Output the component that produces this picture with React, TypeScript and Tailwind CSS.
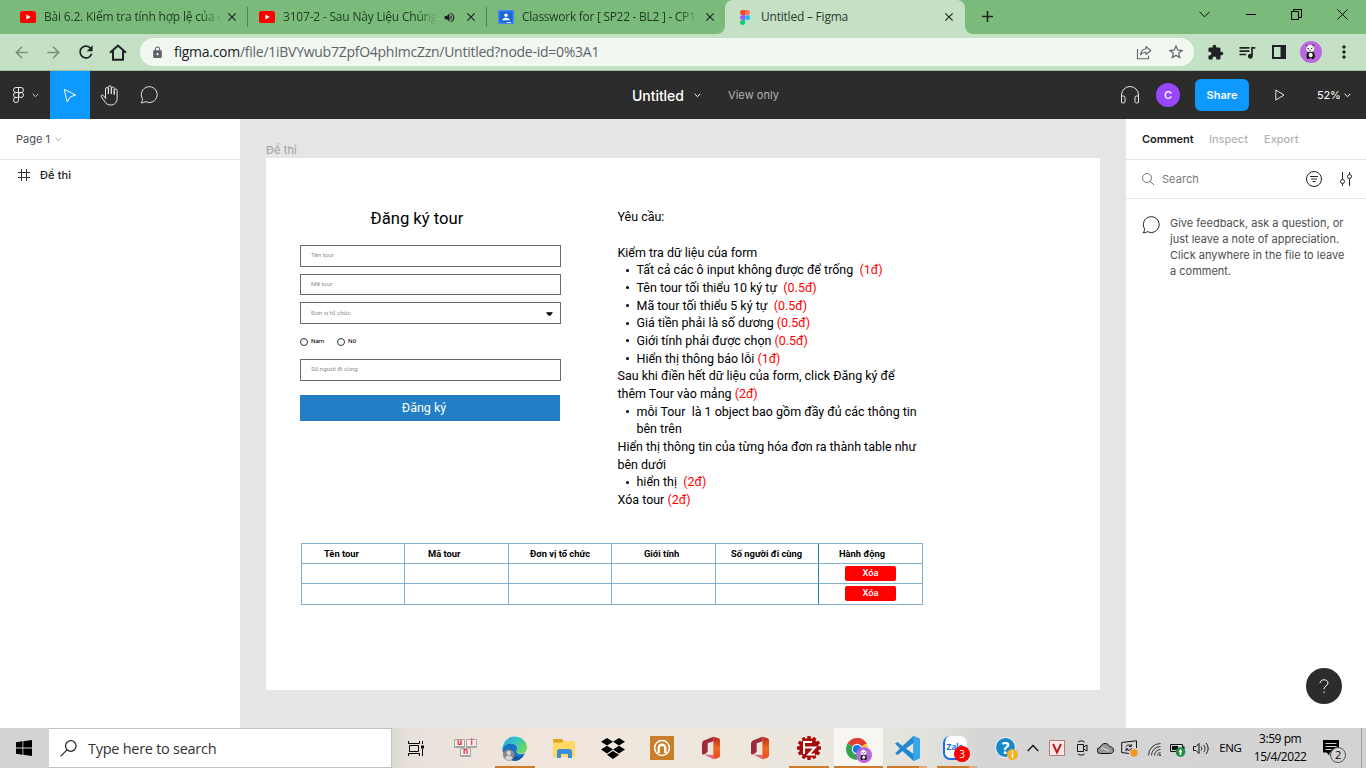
import React from "react";
import {
  MdArrowBack,
  MdArrowForward,
  MdRefresh,
  MdLock,
  MdStarBorder,
  MdExtension,
  MdQueueMusic,
  MdMoreVert,
  MdClose,
  MdAdd,
  MdVolumeUp,
} from "react-icons/md";

const segoe = "font-['Open_Sans','Noto_Sans',sans-serif]";
const inter = "font-['Inter',sans-serif]";
const roboto = "font-['Roboto',sans-serif]";

function YouTube() {
  return (
    <svg width="16" height="12" viewBox="0 0 16 12" className="shrink-0">
      <rect width="16" height="12" rx="2.6" fill="#f00" />
      <path d="M6.4 3.4v5.2L10.8 6z" fill="#fff" />
    </svg>
  );
}

function Classroom() {
  return (
    <svg width="16" height="14" viewBox="0 0 16 14" className="shrink-0">
      <rect width="16" height="14" rx="1" fill="#4285f4" />
      <rect x="1.5" y="1.5" width="13" height="11" fill="#1967d2" />
      <circle cx="8" cy="5.2" r="1.7" fill="#fff" />
      <path d="M4.2 10.3c0-1.7 2-2.6 3.8-2.6s3.8.9 3.8 2.6z" fill="#fff" />
      <rect x="9" y="12" width="4" height="1" fill="#e8eaed" />
    </svg>
  );
}

function FigmaColor() {
  return (
    <svg width="10" height="15" viewBox="0 0 10 15" className="shrink-0">
      <path d="M5 0H2.5a2.5 2.5 0 0 0 0 5H5z" fill="#f24e1e" />
      <path d="M5 0h2.5a2.5 2.5 0 0 1 0 5H5z" fill="#ff7262" />
      <path d="M5 5H2.5a2.5 2.5 0 0 0 0 5H5z" fill="#a259ff" />
      <circle cx="7.5" cy="7.5" r="2.5" fill="#1abcfe" />
      <path d="M5 10H2.5A2.5 2.5 0 1 0 5 12.5z" fill="#0acf83" />
    </svg>
  );
}

function Panda({ size }: { size: number }) {
  return (
    <svg width={size} height={size} viewBox="0 0 22 22" className="shrink-0">
      <circle cx="11" cy="11" r="11" fill="#b968e0" />
      <circle cx="7.2" cy="5" r="1.2" fill="#333" />
      <circle cx="13" cy="4.6" r="1.2" fill="#333" />
      <ellipse cx="10.2" cy="7.4" rx="4" ry="3.5" fill="#f5f5f5" />
      <path d="M7.4 7.4l1.600.500M12.400 7l-1.500.700M9.400 9.300h1.200" stroke="#222" strokeWidth="1" />
      <path d="M7 11.500c2-1 5.500-1 7.200 0l1 4.500-1.200.500.200 1.500H11.400v-1H9.800v1H7l.200-1.500-1-.500z" fill="#1c1c1c" />
      <ellipse cx="10.700" cy="14" rx="2" ry="2.300" fill="#f5f5f5" />
    </svg>
  );
}

function Chevron({ className = "", w = 7 }: { className?: string; w?: number }) {
  return (
    <svg width={w} height="5" viewBox="0 0 7 5" fill="none" stroke="currentColor" className={className}>
      <path d="M.6.8l2.9 2.9L6.4.8" />
    </svg>
  );
}

function Bubble() {
  return (
    <svg width="19" height="18" viewBox="0 0 19 18" fill="none" stroke="currentColor" className="shrink-0">
      <path d="M1 16.8c1.2-1.2 1.7-2.5 1.5-4.1A7.9 7.9 0 1 1 5.6 15.6c-1.2.9-2.7 1.3-4.6 1.2z" strokeLinejoin="round" />
    </svg>
  );
}

type TabProps = { icon: React.ReactNode; label: string; width: string; textWidth: string; audio?: boolean; lead: string };

function Tab({ icon, label, width, textWidth, audio, lead }: TabProps) {
  return (
    <div className={`relative flex h-[34px] shrink-0 items-center ${width} ${lead}`}>
      {icon}
      <div
        className={`ml-2 h-5 overflow-hidden whitespace-nowrap text-[12px] leading-5 tracking-[-0.200px] text-[#1e3a20] [mask-image:linear-gradient(to_right,black_88%,transparent)] ${textWidth}`}
      >
        {label}
      </div>
      {audio && <MdVolumeUp size={13} className="ml-[6px] text-[#202124]" />}
      <MdClose size={14} className="absolute right-[9px] text-[#202124]" />
      <div className="absolute right-0 top-[7px] h-5 w-px bg-[#4f8352]" />
    </div>
  );
}

function BrowserTabs() {
  return (
    <div className="flex h-[34px] bg-[#7abb7c]">
      <Tab icon={<YouTube />} label="Bài 6.2. Kiểm tra tính hợp lệ của c" width="w-[248px]" textWidth="w-[178px]" lead="pl-5" />
      <Tab icon={<YouTube />} label="3107-2 - Sau Này Liệu Chúng" width="w-[239px]" textWidth="w-[154px]" lead="pl-[11px]" audio />
      <div className="relative flex h-[34px] w-[238px] shrink-0 items-center pl-[11px]">
        <Classroom />
        <div className="ml-2 h-5 w-[176px] overflow-hidden whitespace-nowrap text-[12px] leading-5 tracking-[-0.280px] text-[#1e3a20] [mask-image:linear-gradient(to_right,black_90%,transparent)]">
          Classwork for [ SP22 - BL2 ] - CP1
        </div>
        <MdClose size={14} className="absolute right-[8px] text-[#202124]" />
      </div>
      <div className="relative flex h-[34px] w-[240px] shrink-0 items-center rounded-t-lg bg-[#c5e1c5] pl-[15px]">
        <svg width="8" height="8" className="absolute -left-2 bottom-0">
          <path d="M8 0v8H0a8 8 0 0 0 8-8z" fill="#c5e1c5" />
        </svg>
        <svg width="8" height="8" className="absolute -right-2 bottom-0">
          <path d="M0 0v8h8a8 8 0 0 1-8-8z" fill="#c5e1c5" />
        </svg>
        <FigmaColor />
        <div className="ml-[11px] whitespace-nowrap text-[12px] leading-5 tracking-[-0.220px] text-[#2a3a2b]">Untitled – Figma</div>
        <MdClose size={14} className="absolute right-[9px] text-[#202124]" />
      </div>
      <MdAdd size={19} className="ml-[13px] mt-[7px] text-[#202124]" />
      <div className="ml-auto flex h-7 items-center text-black">
        <svg width="11" height="7" viewBox="0 0 11 7" fill="none" stroke="currentColor" className="mr-9">
          <path d="M.5.8l5 5 5-5" />
        </svg>
        <div className="mr-[35px] h-px w-[10px] bg-black" />
        <svg width="11" height="11" viewBox="0 0 11 11" fill="none" stroke="currentColor" className="mr-[35px]">
          <path d="M.5 2.5h7v8h-7zM2.5 2.5v-2h8v8h-3" />
        </svg>
        <svg width="11" height="11" viewBox="0 0 11 11" fill="none" stroke="currentColor" className="mr-[18px]">
          <path d="M.5.5l10 10M10.500.5l-10 10" />
        </svg>
      </div>
    </div>
  );
}

function AddressBar() {
  return (
    <div className="flex h-[37px] items-center border-b border-[#a3bda3] bg-[#c5e1c5] text-[#202124]">
      <MdArrowBack size={19} className="ml-[12px] text-[#7d917d]" />
      <MdArrowForward size={19} className="ml-[13px] text-[#7d917d]" />
      <MdRefresh size={20} className="ml-[13px]" />
      <svg width="18" height="17" viewBox="0 0 18 17" fill="none" stroke="currentColor" strokeWidth="2" className="ml-[13px]">
        <path d="M1 8.800L9 1.500l8 7.300M4 7v8.700h10V7" />
      </svg>
      <div className="ml-[13px] flex h-7 w-[1054px] items-center rounded-full bg-[#f1f8f1]">
        <MdLock size={13} className="ml-[11px] text-[#5f6368]" />
        <div className="ml-[10px] whitespace-nowrap text-[14px] leading-5 tracking-[-0.265px] text-[#5f6368]">
          <span className="text-[#202124]">figma.com</span>/file/1iBVYwub7ZpfO4phImcZzn/Untitled?node-id=0%3A1
        </div>
        <svg width="16" height="15" viewBox="0 0 16 15" fill="none" stroke="#5f6368" strokeWidth="1.100" className="ml-auto mr-[15px]">
          <path d="M1.500 4v9.800h11v-3" />
          <path d="M10 1.500l4.800 4.200L10 9.500V7.300C7.500 7.200 5.800 8 4.500 10c.3-3.600 2-5.800 5.500-6.200z" strokeLinejoin="round" />
        </svg>
        <MdStarBorder size={18} className="mr-[9px] text-[#5f6368]" />
      </div>
      <MdExtension size={17} className="ml-[13px]" />
      <MdQueueMusic size={20} className="ml-[13px]" />
      <svg width="14" height="14" viewBox="0 0 14 14" className="ml-[15px]">
        <path d="M1 1h12v12H1z" fill="none" stroke="#202124" strokeWidth="2" />
        <path d="M8.500 1H13v12H8.500z" fill="#202124" />
      </svg>
      <div className="ml-[14px]">
        <Panda size={22} />
      </div>
      <MdMoreVert size={20} className="ml-3" />
    </div>
  );
}

function FigmaBar() {
  return (
    <div className={`flex h-12 items-center bg-[#2c2c2c] text-white ${inter}`}>
      <div className="flex h-12 w-[50px] items-center pl-[13px]">
        <svg width="11" height="16" viewBox="0 0 11 16" fill="none" stroke="#e6e6e6">
          <path d="M5.500.5H3a2.500 2.500 0 0 0 0 5h2.500zM5.500.5H8a2.500 2.500 0 0 1 0 5H5.500zM5.500 5.500H3a2.500 2.500 0 0 0 0 5h2.500zM5.500 10.500H3A2.500 2.500 0 1 0 5.500 13z" />
          <circle cx="8" cy="8" r="2.500" />
        </svg>
        <Chevron className="ml-[8px] text-[#ccc]" />
      </div>
      <div className="flex h-12 w-10 items-center justify-center bg-[#0d99ff]">
        <svg width="14" height="15" viewBox="0 0 14 15" fill="none" stroke="#fff">
          <path d="M1.200 1.200l11.300 5.900-5.100 1.700-3.300 5z" strokeLinejoin="round" />
        </svg>
      </div>
      <div className="flex h-12 w-10 items-center justify-center pr-[2px]">
        <svg width="19" height="21" viewBox="0 0 19 21" fill="none" stroke="#e6e6e6" strokeLinecap="round" strokeLinejoin="round">
          <path d="M5.500 11.500V4a1.400 1.400 0 0 1 2.900 0v5V2.300a1.400 1.400 0 0 1 2.900 0V9 3.500a1.400 1.400 0 0 1 2.900 0V9.500 5.500a1.400 1.400 0 0 1 2.900 0V13c0 4.300-2.600 7-6.300 7-3.300 0-5-1.500-6.500-4L1.400 12c-1-1.800 1-2.700 2-1.400l2.100 2.600z" />
        </svg>
      </div>
      <div className="flex h-12 w-10 items-center justify-center pr-[2px] text-[#e6e6e6]">
        <Bubble />
      </div>
      <div className="ml-[461px] w-[54px] whitespace-nowrap pl-px text-[14px] font-medium tracking-[-0.050px]">Untitled</div>
      <Chevron className="ml-[9px]" />
      <div className="ml-[27px] whitespace-nowrap text-[11px] tracking-[0.060px] text-[#b3b3b3]">View only</div>
      <svg width="20" height="18" viewBox="0 0 20 18" fill="none" stroke="#e6e6e6" className="ml-auto">
        <path d="M1.500 16.500V9a8.500 8.500 0 0 1 17 0v7.500M1.500 10h2a1.500 1.500 0 0 1 1.500 1.500v4A1.500 1.500 0 0 1 3.500 17h-.600a1.400 1.400 0 0 1-1.400-1.400zM18.500 10h-2a1.500 1.500 0 0 0-1.500 1.500v4a1.500 1.500 0 0 0 1.500 1.500h.600a1.400 1.400 0 0 0 1.400-1.400z" />
      </svg>
      <div className="ml-4 flex h-6 w-6 items-center justify-center rounded-full bg-[#9747ff] text-[11px] font-medium">C</div>
      <div className="ml-[15px] flex h-8 w-[54px] items-center justify-center rounded-md bg-[#0d99ff] text-[11px] font-semibold">Share</div>
      <svg width="10" height="12" viewBox="0 0 10 12" fill="none" stroke="#e6e6e6" className="ml-[26px]">
        <path d="M.8 1v10l8.200-5z" strokeLinejoin="round" />
      </svg>
      <div className="ml-8 w-[23px] text-[11px] tracking-[-0.200px]">52%</div>
      <Chevron className="ml-1 mr-[15px]" />
    </div>
  );
}

function LeftPanel() {
  return (
    <div className={`w-[240px] shrink-0 bg-white text-[11px] ${inter}`}>
      <div className="flex h-[41px] items-center border-b border-[#e5e5e5] pl-4 text-[#4d4d4d]">
        Page 1<Chevron className="ml-[5px] text-[#aaa]" />
      </div>
      <div className="flex h-[30px] items-center pl-[18px] font-medium text-[#1a1a1a]">
        <svg width="12" height="12" viewBox="0 0 12 12" stroke="#333" className="mr-[10px]">
          <path d="M3.500 0v12M8.500 0v12M0 3.500h12M0 8.500h12" />
        </svg>
        <span className="tracking-[0.100px]">Đề thi</span>
      </div>
    </div>
  );
}

const fieldClass = "flex w-[261px] items-center border border-[#6b6b6b] pl-[10px] text-[6.24px] text-[#8c8c8c]";

function TourForm() {
  return (
    <div className="flex w-[261px] shrink-0 flex-col">
      <div className="mt-[49px] h-6 pl-[70.500px] text-[16.64px] leading-6 text-black">Đăng ký tour</div>
      <div className={`mt-[14px] h-[22px] ${fieldClass}`}>Tên tour</div>
      <div className={`mt-[7px] h-[21px] ${fieldClass}`}>Mã tour</div>
      <div className={`mt-[7px] h-[22px] pt-px ${fieldClass}`}>
        Đơn vị tổ chức
        <svg width="7" height="4" viewBox="0 0 8 4" className="ml-auto mr-[7px]">
          <path d="M0 0h8L5 4H3z" fill="#000" />
        </svg>
      </div>
      <div className="mt-3 flex h-3 items-center text-[6.24px] text-black">
        <span className="mr-[3px] h-2 w-2 rounded-full border border-[#333]" />
        <span className="w-[26px]">Nam</span>
        <span className="mr-[3px] h-2 w-2 rounded-full border border-[#333]" />
        Nữ
      </div>
      <div className={`mt-[11px] h-[22px] ${fieldClass}`}>Số người đi cùng</div>
      <div className="mt-[14px] flex h-[26px] w-[260px] items-center justify-center bg-[#237fc5] pr-3 text-[12.480px] text-white">
        Đăng ký
      </div>
    </div>
  );
}

function Line({ text, score, bullet }: { text: string; score?: string; bullet?: boolean }) {
  return (
    <div className="relative flex h-[17.680px] items-center whitespace-pre leading-[17.680px]">
      {bullet !== undefined && (
        <span className="flex w-[19px] justify-center">{bullet && <span className="h-[3px] w-[3px] rounded-full bg-black" />}</span>
      )}
      <span>
        {text}
        {score && <span className="text-[#f00]">{score}</span>}
      </span>
    </div>
  );
}

function Requirements() {
  return (
    <div className="ml-[56.500px] mt-[50.400px] text-[12.480px] text-black">
      <Line text="Yêu cầu:" />
      <Line text=" " />
      <Line text="Kiểm tra dữ liệu của form" />
      <Line bullet text="Tất cả các ô input không được để trống  " score="(1đ)" />
      <Line bullet text="Tên tour tối thiểu 10 ký tự  " score="(0.5đ)" />
      <Line bullet text="Mã tour tối thiểu 5 ký tự  " score="(0.5đ)" />
      <Line bullet text="Giá tiền phải là số dương " score="(0.5đ)" />
      <Line bullet text="Giới tính phải được chọn " score="(0.5đ)" />
      <Line bullet text="Hiển thị thông báo lỗi " score="(1đ)" />
      <Line text="Sau khi điền hết dữ liệu của form, click Đăng ký để" />
      <Line text="thêm Tour vào mảng " score="(2đ)" />
      <Line bullet text="mỗi Tour  là 1 object bao gồm đầy đủ các thông tin" />
      <Line bullet={false} text="bên trên" />
      <Line text="Hiển thị thông tin của từng hóa đơn ra thành table như" />
      <Line text="bên dưới" />
      <Line bullet text="hiển thị  " score="(2đ)" />
      <Line text="Xóa tour " score="(2đ)" />
    </div>
  );
}

const headers: [string, string][] = [
  ["Tên tour", "pl-[22px]"],
  ["Mã tour", "pl-[23px]"],
  ["Đơn vị tổ chức", "pl-[21px]"],
  ["Giới tính", "pl-[32px]"],
  ["Số người đi cùng", "pl-[15px]"],
  ["Hành động", "pl-[20px]"],
];

function TourTable() {
  return (
    <div className="ml-[35px] grid w-[622px] grid-cols-[103px_104px_103px_104px_103px_104px] border-l border-t border-[#7fb3d0] text-[9.360px] font-bold text-black">
      {headers.map(([h, pad], i) => (
        <div
          key={h}
          className={`flex h-5 items-center whitespace-nowrap border-b border-r border-b-[#7fb3d0] pt-px ${i === 4 ? "border-r-[#237fb5]" : "border-r-[#7fb3d0]"} ${pad}`}
        >
          {h}
        </div>
      ))}
      {Array.from({ length: 12 }, (_, i) => (
        <div
          key={i}
          className={`flex items-center border-b border-r border-b-[#7fb3d0] pl-[26px] ${i > 5 ? "h-[21px] pb-px" : "h-5"} ${i % 6 === 4 ? "border-r-[#237fb5]" : "border-r-[#7fb3d0]"}`}
        >
          {i % 6 === 5 && (
            <div className="flex h-[15px] w-[51px] items-center justify-center rounded-[2px] bg-[#f00] text-[9.360px] font-medium text-white">Xóa</div>
          )}
        </div>
      ))}
    </div>
  );
}

function Canvas() {
  return (
    <div className="flex-1 bg-[#e5e5e5] pl-[26px]">
      <div className={`flex h-[39px] items-end text-[11px] tracking-[0.100px] text-[#a0a0a0] ${inter}`}>Đề thi</div>
      <div className={`h-[532px] w-[834px] bg-white ${roboto}`}>
        <div className="flex h-[385px] pl-[34px]">
          <TourForm />
          <Requirements />
        </div>
        <TourTable />
      </div>
    </div>
  );
}

function RightPanel() {
  return (
    <div className={`relative w-[240px] shrink-0 bg-white text-[11px] ${inter}`}>
      <div className="flex h-[41px] items-center border-b border-[#e5e5e5] pl-4 font-medium text-[#b3b3b3]">
        <span className="w-[67px] font-semibold text-[#1a1a1a]">Comment</span>
        <span className="w-[55px]">Inspect</span>
        <span>Export</span>
      </div>
      <div className="flex h-[39px] items-center border-b border-[#e5e5e5] pl-4 text-[#777]">
        <svg width="12" height="12" viewBox="0 0 12 12" fill="none" stroke="#777">
          <circle cx="5" cy="5" r="4.500" />
          <path d="M8.200 8.200L12 12" />
        </svg>
        <span className="ml-2 tracking-[0.050px]">Search</span>
        <svg width="16" height="16" viewBox="0 0 16 16" fill="none" stroke="#222" className="ml-auto">
          <circle cx="8" cy="8" r="7.500" />
          <path d="M4 5.500h8M5 8h6M6.500 10.500h3" />
        </svg>
        <svg width="12" height="14" viewBox="0 0 12 14" fill="none" stroke="#222" className="ml-[18px] mr-[14px]">
          <path d="M2.500 0v7.500M2.500 11.500V14M9.500 0v2.500M9.500 6.500V14" />
          <circle cx="2.500" cy="9.500" r="2" />
          <circle cx="9.500" cy="4.500" r="2" />
        </svg>
      </div>
      <div className="flex pl-4 pt-4 text-[#4d4d4d]">
        <div className="mt-px text-[#222]">
          <Bubble />
        </div>
        <p className="ml-[9px] whitespace-pre leading-4">
          {"Give feedback, ask a question, or\njust leave a note of appreciation.\nClick anywhere in the file to leave\na comment."}
        </p>
      </div>
      <div className="absolute bottom-[24px] right-[24px] flex h-9 w-9 items-center justify-center rounded-full bg-[#2c2c2c]">
        <svg width="10" height="15" viewBox="0 0 10 15" fill="none" stroke="#fff">
          <path d="M1 4.200C1 2.200 2.700.8 5 .8s4 1.300 4 3.200C9 6.800 5 6.800 5 10.200M5 12.500v1.500" />
        </svg>
      </div>
    </div>
  );
}

function Cell({ children, bar = "", active }: { children: React.ReactNode; bar?: string; active?: boolean }) {
  return (
    <div className={`relative flex h-10 w-[49.100px] shrink-0 items-center justify-center ${active ? "bg-[#f7f6f1]" : ""}`}>
      {children}
      {bar && <div className={`absolute bottom-0 h-[2px] ${bar}`} />}
    </div>
  );
}

function Edge() {
  return (
    <svg width="25" height="25" viewBox="0 0 25 25">
      <defs>
        <linearGradient id="edgeTop" x1="0" y1="0" x2="1" y2="0.6">
          <stop offset="0" stopColor="#2aa7e0" />
          <stop offset="0.500" stopColor="#35c2c8" />
          <stop offset="1" stopColor="#69d95a" />
        </linearGradient>
      </defs>
      <path d="M.5 13C1 5.500 6 .500 12.500.500 20 .500 25 6 25 11.500c0 3.700-2.600 6-6 6-2.600 0-4.500-.800-4.500-2 0-.700 1-1.200 1-3C15.500 9.700 13 7.800 9.500 7.800 5 7.800 1.500 10 .5 13z" fill="url(#edgeTop)" />
      <path d="M.5 13C1.500 10 4.500 7.800 9 7.800c3.500 0 6.300 2 6.300 4.700 0 1.800-1 2.300-1 3 0 1.400 2.300 2.600 5.200 2.600 1.400 0 2.600-.400 3.500-1-2 4.700-5.700 7.700-10.200 7.700C6 24.800.500 19.500.5 13z" fill="#1673c5" />
      <path d="M9.800 12c-1.600 3 .200 7.600 5 8.800 2.500.500 5-.300 7-1.500-2 3.500-5.300 5.500-9 5.500-5 0-8-4-7.500-8 .200-2.500 2-4.500 4.500-4.800z" fill="#12549f" />
      <circle cx="6.800" cy="19" r="5.800" fill="#888" />
      <circle cx="6.800" cy="17" r="2.200" fill="#d5d5d5" />
      <path d="M3 22.500c.500-4 7.100-4 7.600 0-2 2-5.600 2-7.600 0z" fill="#d5d5d5" />
    </svg>
  );
}

function Office() {
  return (
    <svg width="18" height="24" viewBox="0 0 19 24">
      <defs>
        <linearGradient id="officeSide" x1="0" y1="0" x2="0" y2="1">
          <stop offset="0" stopColor="#b3261c" />
          <stop offset="0.500" stopColor="#ee6a1f" />
          <stop offset="1" stopColor="#e8481f" />
        </linearGradient>
      </defs>
      <path d="M12 0l5.500 1.800Q19 2.300 19 4v16q0 1.700-1.500 2.200L12 24z" fill="url(#officeSide)" />
      <path d="M12 0v5L6 7v8.500q0 1-1 1.500l-3 1.800q-2 .700-2-1.300V7.500Q0 5 2 4z" fill="#9c2a3a" />
      <path d="M2.500 18.800L12 19.500V24z" fill="#e0667c" />
    </svg>
  );
}

function Key({ ch }: { ch: string }) {
  return (
    <span className="flex h-[9px] w-[11px] items-center justify-center rounded-[1px] border border-b-2 border-[#a7a7a7] bg-[#f1efee] pb-[3px] text-[8px] font-bold leading-none text-[#f0282d]">
      {ch}
    </span>
  );
}

const gear = Array.from({ length: 12 }, (_, i) => i * 30);

function Taskbar() {
  return (
    <div className={`flex h-10 bg-[linear-gradient(to_right,#d3d3d3_28%,#e8e1da_30%,#f0e5dc_38%,#efe6dd_50%,#e9e7de_62%,#e2e2dc_68%,#d5d5d5_72%,#d3d3d3_100%)] text-black ${segoe}`}>
      <div className="flex w-[49px] items-center justify-center bg-[#d3d3d3] pr-px">
        <svg width="16" height="16" viewBox="0 0 16 16">
          <path d="M0 2.200L6.500 1.300V7.600H0zM7.300 1.200L16 0v7.600H7.300zM0 8.400h6.500v6.300L0 13.800zM7.300 8.400H16V16l-8.700-1.200z" fill="#000" />
        </svg>
      </div>
      <div className="flex w-[343px] items-center border border-l-0 border-[#c4c4c4] bg-white">
        <svg width="17" height="17" viewBox="0 0 17 17" fill="none" stroke="#222" strokeWidth="1.200" className="ml-[11px]">
          <circle cx="10.800" cy="6" r="5.300" />
          <path d="M7 9.900L.500 16.400" />
        </svg>
        <span className="ml-[11px] mt-px whitespace-nowrap text-[14.500px] tracking-[-0.270px] text-[#333]">Type here to search</span>
      </div>
      <Cell>
        <svg width="17" height="15" viewBox="0 0 17 15" fill="none" stroke="#000">
          <path d="M.500 0v2.500h11V0M.500 15v-2.500h11V15M1.500 4.500h9v6h-9zM14.500 0v3M14.500 8v7" />
          <path d="M13 4.500h3v3h-3z" fill="#000" stroke="none" />
        </svg>
      </Cell>
      <Cell>
        <div className="flex w-[23px] flex-wrap justify-center gap-x-px">
          <Key ch="u" />
          <Key ch="i" />
          <Key ch="n" />
        </div>
      </Cell>
      <Cell bar="w-10 bg-[#cb7b2a]">
        <Edge />
      </Cell>
      <Cell>
        <svg width="22" height="19" viewBox="0 0 22 19">
          <path d="M0 0h9l1.500 2H22v5H0z" fill="#e2a41c" />
          <path d="M0 3.500h9L11 2h11v16H0z" fill="#ffd866" />
          <path d="M4 19v-7.500L6 10h11l2 1.500V19h-4v-4H8v4z" fill="#3a8fd6" />
        </svg>
      </Cell>
      <Cell>
        <svg width="24" height="21" viewBox="0 0 24 21">
          <path d="M6 0l6 3.800-6 3.800L0 3.800zM18 0l6 3.800-6 3.800-6-3.800zM6 7.800l6 3.800-6 3.800-6-3.800zM18 7.800l6 3.800-6 3.800-6-3.800zM12 13l6 3.700L12 21l-6-4.300z" fill="#000" />
        </svg>
      </Cell>
      <Cell>
        <svg width="24" height="24" viewBox="0 0 24 24">
          <path d="M0 0h24v24H0z" fill="#cb7e2a" />
          <circle cx="12" cy="12" r="7.400" fill="none" stroke="#fff" strokeWidth="1.500" />
          <path d="M8.700 17v-5a3.300 3.300 0 0 1 6.600 0v5" fill="none" stroke="#fff" strokeWidth="2.400" />
        </svg>
      </Cell>
      <Cell>
        <Office />
      </Cell>
      <Cell>
        <Office />
      </Cell>
      <Cell bar="w-10 bg-[#cb7b2a]">
        <svg width="24" height="24" viewBox="0 0 24 24">
          {gear.map((a) => (
            <rect key={a} x="10.300" y="0" width="3.400" height="5" rx="0.600" fill="#a80a0a" transform={`rotate(${a} 12 12)`} />
          ))}
          <circle cx="12" cy="12" r="10" fill="#a80a0a" />
          <path d="M7 18V6h8M7 11.500h5.500M11.500 11.500H18l-6.500 7h6.500" fill="none" stroke="#fff" strokeWidth="2" />
        </svg>
      </Cell>
      <Cell active bar="w-full bg-[#cb7b2a]">
        <div className="relative h-[25px] w-[25px]">
          <svg width="22" height="22" viewBox="0 0 22 22" className="mt-[2px]">
            <path d="M11 11L1.500 5.500A11 11 0 0 1 20.500 5.500z" fill="#e23f33" />
            <path d="M11 11L1.500 5.500A11 11 0 0 0 11 22l5-8z" fill="#32a350" />
            <path d="M11 11l9.500-5.500A11 11 0 0 1 11 22l5-8z" fill="#fcc934" />
            <path d="M11 6h9.800l-.300-.500A11 11 0 0 0 11 0z" fill="#e23f33" />
            <circle cx="11" cy="11" r="5.200" fill="#fff" />
            <circle cx="11" cy="11" r="4.100" fill="#1a73e8" />
          </svg>
          <div className="absolute -right-[1px] bottom-[-2px]">
            <Panda size={16} />
          </div>
        </div>
      </Cell>
      <Cell bar="w-10 bg-[linear-gradient(to_right,#cb7b2a_80%,#e3aa78_80%)]">
        <svg width="25" height="25" viewBox="0 0 25 25">
          <path d="M18.500 0L25 3v19l-6.500 3L7.500 15 2.500 19 0 17.500 5 12.500 0 7.500 2.500 6l5 4zM18.500 7l-7.500 5.500 7.500 5.500z" fill="#1f8ad2" fillRule="evenodd" />
          <path d="M18.500 0L25 3v19l-6.500 3z" fill="#35a5ee" />
        </svg>
      </Cell>
      <Cell bar="w-10 bg-[linear-gradient(to_right,#cb7b2a_80%,#e3aa78_80%)]">
        <div className="relative mr-1 h-6 w-6 rounded-[7px] border-b-2 border-l-2 border-[#1a6fe8] bg-white pl-[2px] pt-[5px] text-[8.500px] font-bold leading-3 tracking-[-0.300px] text-[#2474e8]">
          Zalo
        </div>
        <div className="absolute left-[22px] top-[18px] flex h-4 w-4 items-center justify-center rounded-full bg-[#f00] text-[10px] text-white">3</div>
      </Cell>
      <div className="relative ml-[14px] mt-[9px] h-[23px] w-[23px] shrink-0">
        <div className="flex h-[21px] w-[21px] items-center justify-center rounded-full border border-white bg-[#1689ca] text-[16px] font-bold text-white">?</div>
        <svg width="11" height="11" viewBox="0 0 11 11" className="absolute bottom-0 right-0">
          <circle cx="5.500" cy="5.500" r="5.500" fill="#f4b223" />
          <path d="M5.500 2v1.500M5.500 4.500V9" stroke="#fff" strokeWidth="1.500" />
        </svg>
      </div>
      <svg width="12" height="8" viewBox="0 0 12 8" fill="none" stroke="#111" strokeWidth="1.300" className="ml-[9px] mt-4 shrink-0">
        <path d="M.700 7L6 1.500 11.300 7" />
      </svg>
      <svg width="16" height="16" viewBox="0 0 16 16" className="ml-[10px] mt-3 shrink-0">
        <path d="M.500.500h15v15H.500z" fill="#fbe8e8" stroke="#b77" />
        <path d="M4 4l4 8.500L12 4" fill="none" stroke="#c4161c" strokeWidth="2" />
      </svg>
      <svg width="12" height="16" viewBox="0 0 12 16" fill="none" stroke="#111" className="ml-[11px] mt-3 shrink-0">
        <path d="M1.500 4.500h6v7h-6zM7.500 7l3.500-2v6l-3.500-2M2 2c2-1.500 4.500-1.500 6.500 0M2 14c2 1.500 4.500 1.500 6.500 0" />
      </svg>
      <svg width="17" height="11" viewBox="0 0 17 11" className="ml-[9px] mt-[15px] shrink-0">
        <path d="M3.500 10.500a3 3 0 0 1-.500-6C4 1.800 6 .500 8 .500c2.500 0 4 1.500 4.700 3.200C15 3.800 16.500 5.200 16.500 7.200s-1.500 3.300-3.200 3.300z" fill="#999" stroke="#111" />
        <path d="M4 5c3 0 5 2 8 3" stroke="#eee" fill="none" />
      </svg>
      <svg width="17" height="17" viewBox="0 0 17 17" fill="none" stroke="#111" className="ml-[7px] mt-3 shrink-0">
        <path d="M8 13.500L.700 12.500V2.500L15.500.800V8" />
        <path d="M5 7c.500-2.300 3.500-2.800 5-.800M10.200 4v2.500H8M10.500 8c-.600 2.500-3.600 3-5 1M5 11.200V8.800h2.200" />
        <circle cx="13" cy="13" r="3.700" fill="#f7941d" stroke="none" />
      </svg>
      <svg width="13" height="13" viewBox="0 0 13 13" fill="none" stroke="#333" className="ml-[10px] mt-[15px] shrink-0">
        <path d="M.500 12.500A12 12 0 0 1 12.500.500M3.500 12.500a9 9 0 0 1 9-9M6.500 12.500a6 6 0 0 1 6-6M9.500 12.500a3 3 0 0 1 3-3" />
        <circle cx="12" cy="12" r="1" fill="#333" stroke="none" />
      </svg>
      <svg width="16" height="14" viewBox="0 0 16 14" className="ml-[9px] mt-[15px] shrink-0">
        <path d="M.500 1.500h12v7H.500z" fill="none" stroke="#111" />
        <path d="M2 3h6v4H2zM13 3.500h1.500v3H13z" fill="#111" />
        <circle cx="10.500" cy="9" r="4.800" fill="#1b8f3a" />
        <path d="M10.500 5.800l2 3.200-1.200.500V12H9.700V9.500L8.500 9z" fill="#fff" />
      </svg>
      <svg width="16" height="13" viewBox="0 0 16 13" fill="none" stroke="#111" className="ml-[7px] mt-[14px] shrink-0">
        <path d="M.500 4.500H3L6 1.500v10l-3-3H.500zM8 4.500c1 1.200 1 2.800 0 4M10.500 2.800c2 2.200 2 5.200 0 7.400M13 1c2.800 3.200 2.800 7.800 0 11" />
      </svg>
      <span className="ml-[10px] w-[24px] shrink-0 text-[11.500px] leading-10 tracking-[-0.300px]">ENG</span>
      <div className="ml-[7px] mt-[2px] flex w-[60px] shrink-0 flex-col items-center whitespace-nowrap text-[12px] leading-[18px] tracking-[-0.450px]">
        <span>3:59 pm</span>
        <span>15/4/2022</span>
      </div>
      <div className="relative ml-[13px] mt-3 h-7 w-6 shrink-0">
        <svg width="16" height="16" viewBox="0 0 16 16">
          <path d="M0 0h16v12.500H6.500v3L3.500 12.500H0z" fill="#000" />
          <path d="M2.500 3.500h11M2.500 6.500h11M2.500 9.500h6" stroke="#d3d3d3" />
        </svg>
        <div className="absolute left-[7px] top-[7px] flex h-4 w-4 items-center justify-center rounded-full border border-[#555] bg-[#d3d3d3] text-[11px]">2</div>
      </div>
      <div className="ml-auto mr-1 w-px shrink-0 bg-[#a5a5a5]" />
    </div>
  );
}

export default function App() {
  return (
    <div className={`flex h-[768px] w-[1366px] flex-col overflow-hidden ${segoe}`}>
      <BrowserTabs />
      <AddressBar />
      <FigmaBar />
      <div className="flex min-h-0 flex-1">
        <LeftPanel />
        <Canvas />
        <RightPanel />
      </div>
      <Taskbar />
    </div>
  );
}
